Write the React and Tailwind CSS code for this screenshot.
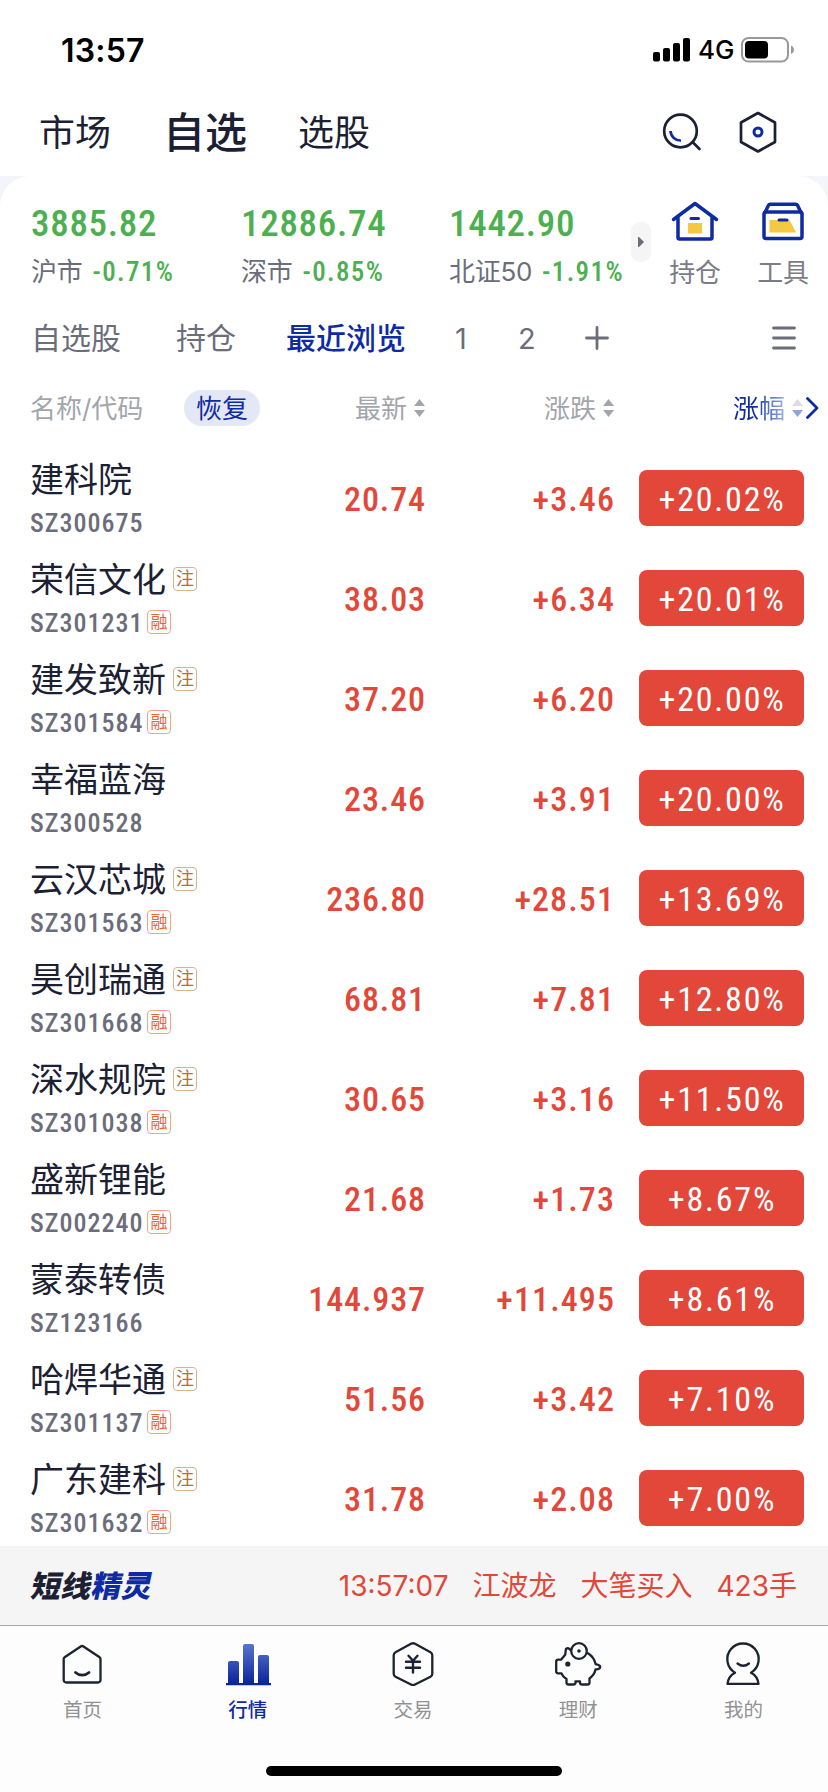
const CJK = "font-['Inter','Noto_Sans_CJK_SC',sans-serif] [font-stretch:100%]";
const DIN = "font-['Roboto_Condensed','Roboto',sans-serif] [font-stretch:75%]";

const indices = [
  { name: "沪市", value: "3885.82", pct: "-0.71%", width: "w-[210px]" },
  { name: "深市", value: "12886.74", pct: "-0.85%", width: "w-[208px]" },
  { name: "北证50", value: "1442.90", pct: "-1.91%", width: "w-[180px]" },
];

const stocks = [
  { name: "建科院", code: "SZ300675", price: "20.74", change: "+3.46", pct: "+20.02%" },
  { name: "荣信文化", code: "SZ301231", price: "38.03", change: "+6.34", pct: "+20.01%", reg: true, margin: true },
  { name: "建发致新", code: "SZ301584", price: "37.20", change: "+6.20", pct: "+20.00%", reg: true, margin: true },
  { name: "幸福蓝海", code: "SZ300528", price: "23.46", change: "+3.91", pct: "+20.00%" },
  { name: "云汉芯城", code: "SZ301563", price: "236.80", change: "+28.51", pct: "+13.69%", reg: true, margin: true },
  { name: "昊创瑞通", code: "SZ301668", price: "68.81", change: "+7.81", pct: "+12.80%", reg: true, margin: true },
  { name: "深水规院", code: "SZ301038", price: "30.65", change: "+3.16", pct: "+11.50%", reg: true, margin: true },
  { name: "盛新锂能", code: "SZ002240", price: "21.68", change: "+1.73", pct: "+8.67%", margin: true },
  { name: "蒙泰转债", code: "SZ123166", price: "144.937", change: "+11.495", pct: "+8.61%" },
  { name: "哈焊华通", code: "SZ301137", price: "51.56", change: "+3.42", pct: "+7.10%", reg: true, margin: true },
  { name: "广东建科", code: "SZ301632", price: "31.78", change: "+2.08", pct: "+7.00%", reg: true, margin: true },
];

export default function App() {
  return (
    <div className={`flex h-[1792px] w-[828px] flex-col overflow-hidden bg-white text-[#1c2033] ${CJK}`}>
      <StatusBar />
      <TopNav />
      <main className="h-[1370px] shrink-0 overflow-hidden bg-[#f4f5fa]">
        <div className="h-full rounded-t-[30px] bg-white">
          <IndexStrip />
          <GroupTabs />
          <ListHeader />
          {stocks.map((stock) => (
            <StockRow key={stock.code} stock={stock} />
          ))}
        </div>
      </main>
      <Ticker />
      <TabBar />
    </div>
  );
}

function StatusBar() {
  return (
    <div className="flex h-[88px] shrink-0 items-center justify-between pt-[12px] pr-[33px] pl-[61px] text-black">
      <span className="pt-px text-[32px] leading-none font-semibold tracking-[0.200px]">13:57</span>
      <div className="flex items-center">
        <svg width="38" height="24" viewBox="0 0 38 24" fill="currentColor">
          <rect x="0" y="14" width="7" height="9.5" rx="2" />
          <rect x="10" y="10" width="7" height="13.5" rx="2" />
          <rect x="20" y="5" width="7" height="18.5" rx="2" />
          <rect x="30" y="0" width="7" height="23.5" rx="2" />
        </svg>
        <span className="ml-[7px] w-[36px] text-[26px] leading-none font-medium">4G</span>
        <svg className="ml-[7px]" width="54" height="26" viewBox="0 0 54 26">
          <rect x="1" y="1" width="46" height="23.5" rx="6.5" fill="none" stroke="#999" strokeWidth="2" />
          <rect x="4" y="4" width="23" height="17.5" rx="4" fill="#000" />
          <path d="M50 8.500c1.900 1 3 2.500 3 4.300s-1.100 3.300-3 4.300z" fill="#999" />
        </svg>
      </div>
    </div>
  );
}

function TopNav() {
  return (
    <nav className="flex h-[88px] shrink-0 items-center pl-[39px]">
      <span className="w-[124px] pt-px text-[36px] leading-none">市场</span>
      <span className="w-[135px] pt-px text-[42px] leading-none font-medium">自选</span>
      <span className="w-[364px] pt-px text-[36px] leading-none">选股</span>
      <svg width="40" height="40" viewBox="0 0 40 40" fill="none" stroke="#1c2033" strokeWidth="2.700" strokeLinecap="round">
        <circle cx="18.500" cy="19" r="16.300" />
        <path d="M31 30.500 37.500 37" />
        <path d="M8.500 19a10 10 0 0 0 10.500 9.500" stroke="#0f2ba3" strokeLinecap="butt" />
      </svg>
      <svg className="ml-[37px]" width="38" height="42" viewBox="0 0 38 42" fill="none" stroke="#1c2033" strokeWidth="2.700" strokeLinejoin="round">
        <path d="M19 2 36 11.500V31L19 40.500 2 31V11.500z" />
        <circle cx="19" cy="21" r="4" stroke="#0f2ba3" strokeWidth="3" />
      </svg>
    </nav>
  );
}

function IndexStrip() {
  return (
    <section className="flex h-[122px] pt-[25px] pl-[31px]">
      {indices.map((item) => (
        <div key={item.name} className={`shrink-0 ${item.width}`}>
          <div className={`text-[37px] leading-[46px] font-medium tracking-[0.700px] text-[#4caf50] ${DIN}`}>{item.value}</div>
          <div className="flex h-[50px] items-center gap-[10px] whitespace-nowrap">
            <span className="text-[26px] leading-none tracking-[-0.300px] text-[#6b6d7b]">{item.name}</span>
            <span className={`text-[27px] leading-none font-medium tracking-[1.400px] text-[#4caf50] ${DIN}`}>{item.pct}</span>
          </div>
        </div>
      ))}
      <div className="mt-[21px] ml-[2px] flex h-[40px] w-[20px] items-center justify-center rounded-[9px] bg-[#f5f5f5]">
        <svg width="6" height="10" viewBox="0 0 6 10" fill="#6b6d7b">
          <path d="M0 0h1l5 5-5 5H0z" />
        </svg>
      </div>
      <Shortcut label="持仓" className="ml-[19px]">
        <svg width="48" height="42" viewBox="0 0 48 42" fill="none" stroke="#0f2ba3" strokeWidth="3.500" strokeLinecap="round" strokeLinejoin="round">
          <path d="M2.500 18.500 24 2.500l21.500 16M7 16v20.500a1.500 1.500 0 0 0 1.500 1.500h31a1.500 1.500 0 0 0 1.500-1.500V16" />
          <path d="M17 22h14v10.500H17z" fill="#f5c842" stroke="none" />
          <path d="M20 17.500h7.500" strokeWidth="3" />
        </svg>
      </Shortcut>
      <Shortcut label="工具" className="ml-[38px]">
        <svg width="48" height="42" viewBox="0 0 48 42" fill="none" stroke="#0f2ba3" strokeWidth="3.500" strokeLinecap="round" strokeLinejoin="round">
          <path d="M5 13v22.500a2 2 0 0 0 2 2h34a2 2 0 0 0 2-2V13a2 2 0 0 0-2-2H7a2 2 0 0 0-2 2z" />
          <path d="M6 11.500 9.500 4.300a2 2 0 0 1 1.800-1.100h25.400a2 2 0 0 1 1.800 1.100l3.500 7.200" />
          <path d="M10.500 19h20l6.500 12.500H10.500z" fill="#f5c842" stroke="none" />
          <path d="M20 19h8" strokeWidth="3" />
        </svg>
      </Shortcut>
    </section>
  );
}

function Shortcut({ label, className, children }) {
  return (
    <div className={`flex w-[50px] shrink-0 flex-col items-center ${className}`}>
      <div className="h-[46px] w-[48px]">{children}</div>
      <span className="flex h-[51px] items-center text-[26px] leading-none tracking-[-0.300px] whitespace-nowrap text-[#7b7c86]">{label}</span>
    </div>
  );
}

function GroupTabs() {
  return (
    <section className="flex h-[80px] items-center pl-[31px] text-[30px] leading-none text-[#6b6d7b]">
      <span className="w-[145px]">自选股</span>
      <span className="w-[110px]">持仓</span>
      <span className="w-[169px] font-medium text-[#0f2ba3]">最近浏览</span>
      <span className="w-[63px] text-[29px]">1</span>
      <span className="w-[67px] text-[29px]">2</span>
      <svg width="24" height="24" viewBox="0 0 24 24" fill="none" stroke="currentColor" strokeWidth="2.800" strokeLinecap="round">
        <path d="M1.500 12h21M12 1.500v21" />
      </svg>
      <svg className="ml-[163px]" width="24" height="24" viewBox="0 0 24 24" fill="none" stroke="currentColor" strokeWidth="2.800" strokeLinecap="round">
        <path d="M1.500 2h21M1.500 12h21M1.500 22h21" />
      </svg>
    </section>
  );
}

function SortArrows({ up = "#a3a5ad", down = "#a3a5ad" }) {
  return (
    <svg width="11" height="18" viewBox="0 0 11 18">
      <path d="M5.500 0 11 7H0z" fill={up} />
      <path d="M0 11h11l-5.500 7z" fill={down} />
    </svg>
  );
}

function ListHeader() {
  return (
    <section className="flex h-[70px] items-center pb-[10px] pl-[30px] text-[26px] leading-none whitespace-nowrap text-[#a3a5ad]">
      <span className="w-[154px] pt-px">名称/代码</span>
      <span className="flex h-[36px] w-[76px] items-center justify-center rounded-full bg-[#e4e8f6] pt-px text-[#0f2ba3]">恢复</span>
      <div className="flex w-[165px] items-center justify-end gap-[7px]">
        <span className="pt-px">最新</span>
        <SortArrows />
      </div>
      <div className="flex w-[189px] items-center justify-end gap-[7px]">
        <span className="pt-px">涨跌</span>
        <SortArrows />
      </div>
      <div className="flex w-[189px] items-center justify-end gap-[7px]">
        <span className="bg-linear-to-r from-[#0f2ba3] from-40% to-[#a5b3df] bg-clip-text pt-px leading-[34px] text-transparent">涨幅</span>
        <SortArrows up="#dddee2" down="#93a3db" />
      </div>
      <svg className="ml-[3px]" width="13" height="22" viewBox="0 0 13 22" fill="none" stroke="#0f2ba3" strokeWidth="2.800" strokeLinecap="round" strokeLinejoin="round">
        <path d="M1.500 1.500 11 11l-9.500 9.500" />
      </svg>
    </section>
  );
}

function StockRow({ stock }) {
  return (
    <div className={`flex h-[100px] items-center pl-[30px] text-[34px] leading-none font-medium text-[#e24739] ${DIN}`}>
      <div className="h-full w-[214px] pt-[9px]">
        <div className={`flex h-[44px] items-center gap-[7px] font-normal whitespace-nowrap ${CJK}`}>
          <span className="pt-px text-[34px] text-[#1c2033]">{stock.name}</span>
          {stock.reg && (
            <span className="flex size-[24px] items-center justify-center rounded-[4px] border border-[#d3b48c] text-[18px] text-[#b2762b]">注</span>
          )}
        </div>
        <div className="mt-[5px] flex h-[32px] items-center">
          <span className="w-[117px] pt-[2px] text-[26px] tracking-[1px] text-[#6b6d7b]">{stock.code}</span>
          {stock.margin && (
            <span className={`flex size-[24px] items-center justify-center rounded-[4px] border border-[#f5a285] text-[17px] font-normal text-[#ec6337] ${CJK}`}>融</span>
          )}
        </div>
      </div>
      <span className="w-[182px] pt-[2px] text-right tracking-[0.900px]">{stock.price}</span>
      <span className="w-[189px] pt-[2px] text-right tracking-[1.100px]">{stock.change}</span>
      <span className="ml-[24px] flex h-[56px] w-[165px] items-center justify-center rounded-[8px] bg-[#e24739] pt-[2px] pl-px font-normal tracking-[1.800px] text-white">
        {stock.pct}
      </span>
    </div>
  );
}

function Ticker() {
  return (
    <section className="flex h-[80px] shrink-0 items-center justify-between border-b border-[#aaabad] bg-[#f5f5f5] pr-[31px] pl-[32px]">
      <div className="-skew-x-12 text-[30px] leading-none font-black tracking-[0.300px]">
        短线<span className="text-[#0f2ba3]">精灵</span>
      </div>
      <div className="flex items-center gap-[24px] text-[28px] leading-none text-[#e24739]">
        <span>13:57:07</span>
        <span>江波龙</span>
        <span>大笔买入</span>
        <span>423手</span>
      </div>
    </section>
  );
}

const tabs = [
  { label: "首页", Icon: HomeIcon },
  { label: "行情", Icon: ChartIcon, active: true },
  { label: "交易", Icon: TradeIcon },
  { label: "理财", Icon: PiggyIcon },
  { label: "我的", Icon: UserIcon },
];

function TabBar() {
  return (
    <footer className="flex flex-1 flex-col items-center bg-[#fdfdfd]">
      <div className="grid w-full grid-cols-5 pt-[12px] pr-[2px]">
        {tabs.map(({ label, Icon, active }) => (
          <div key={label} className="flex flex-col items-center">
            <Icon />
            <span className={`mt-[11px] text-[19.500px] leading-[26px] ${active ? "font-medium text-[#0f2ba3]" : "text-[#929292]"}`}>
              {label}
            </span>
          </div>
        ))}
      </div>
      <div className="mt-[43px] h-[10px] w-[296px] rounded-full bg-black" />
    </footer>
  );
}

function TabSvg({ children }) {
  return (
    <svg width="48" height="48" viewBox="0 0 48 48" fill="none" stroke="#1c2431" strokeWidth="2.300" strokeLinecap="round" strokeLinejoin="round">
      {children}
    </svg>
  );
}

function HomeIcon() {
  return (
    <TabSvg>
      <path d="M21.700 8.500 5.600 19.200a2 2 0 0 0-.9 1.700V42a2.500 2.500 0 0 0 2.500 2.500h31.800a2.500 2.500 0 0 0 2.500-2.500V20.900a2 2 0 0 0-.9-1.700L24.500 8.500a2.500 2.500 0 0 0-2.800 0z" />
      <path d="M16.500 34.500c4 3.500 9.500 3.500 13.500 0" strokeWidth="2.800" />
    </TabSvg>
  );
}

function ChartIcon() {
  return (
    <TabSvg>
      <defs>
        <linearGradient id="bars" x1="0" y1="6" x2="0" y2="46" gradientUnits="userSpaceOnUse">
          <stop offset="0" stopColor="#5b74cf" />
          <stop offset="1" stopColor="#0a249b" />
        </linearGradient>
      </defs>
      <g fill="url(#bars)" stroke="none">
        <path d="M4 46V25a2 2 0 0 1 2-2h7a2 2 0 0 1 2 2v21zM19 46V8a2 2 0 0 1 2-2h7a2 2 0 0 1 2 2v38zM34 46V19a2 2 0 0 1 2-2h7a2 2 0 0 1 2 2v27z" />
        <path d="M2 45h45v2.300H2z" />
      </g>
    </TabSvg>
  );
}

function TradeIcon() {
  return (
    <TabSvg>
      <path d="M22 5.800 6.500 14.300a3.500 3.500 0 0 0-1.800 3v18.400a3.500 3.500 0 0 0 1.800 3L22 46.500a4 4 0 0 0 4 0l15.500-7.800a3.500 3.500 0 0 0 1.800-3V17.300a3.500 3.500 0 0 0-1.800-3L26 5.800a4 4 0 0 0-4 0z" />
      <path d="M19.500 17.800l4.500 5 4.500-5M17 23.800h14M17 29.800h14M24 23v11.500" strokeWidth="2.400" />
    </TabSvg>
  );
}

function PiggyIcon() {
  return (
    <TabSvg>
      <circle cx="25" cy="13" r="7.800" />
      <circle cx="25" cy="13" r="1.800" fill="#1c2431" stroke="none" />
      <circle cx="13.800" cy="26" r="2.600" fill="#1c2431" stroke="none" />
      <path d="M17 12.500c-1.300-2-3.500-2.500-5-1.800l-.8 6-4.200 5H4.200a2 2 0 0 0-2 2v9.600a2 2 0 0 0 2 2h3.300c.8 2.500 2.500 4 5 5.700v3.500a2 2 0 0 0 2 2h5a2 2 0 0 0 2-2v-1.200h4.500v1.200a2 2 0 0 0 2 2h5.500a2 2 0 0 0 2-2v-4c3-2.200 5.200-5.200 6-9 2.500-.2 4.700-1 4.700-2.500s-2-2.300-4.500-2.800c-1-4.700-3.700-8.400-7.700-11" />
    </TabSvg>
  );
}

function UserIcon() {
  return (
    <TabSvg>
      <path d="M16 34.700a15.700 15.700 0 1 1 16 0c4.500 2.300 7 6.200 7.500 11.200H8.500c.5-5 3-8.900 7.500-11.200z" />
      <path d="M18.500 25.500c3.500 2.800 8 2.800 11.500 0" />
    </TabSvg>
  );
}
